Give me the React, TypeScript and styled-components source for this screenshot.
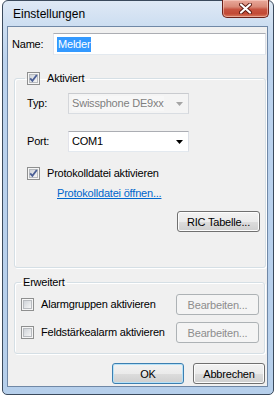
import React from "react";
import styled, { createGlobalStyle } from "styled-components";

const GlobalStyle = createGlobalStyle`
  html, body { margin: 0; padding: 0; background: #ffffff; }
  body { font-family: "Liberation Sans", Arial, sans-serif; font-size: 11px; color: #000; letter-spacing: -0.2px; }
  * { box-sizing: border-box; }
`;

const Window = styled.div`
  margin-left: 2px;
  width: 272px;
  height: 395px;
  border: 1px solid #3b4a5c;
  border-radius: 6px 6px 5px 5px;
  background: linear-gradient(180deg, #dfe9f5 0px, #cddef1 24px, #bcd3ee 60px, #b6cfeb 100%);
  padding: 0 5px 7px 4px;
  display: flex;
  flex-direction: column;
`;

const TitleBar = styled.div`
  height: 25px;
  display: flex;
  align-items: flex-start;
  justify-content: space-between;
`;

const Title = styled.div`
  font-size: 12px;
  line-height: 14px;
  padding: 6px 0 0 6px;
  color: #000;
  letter-spacing: 0;
`;

const CloseButton = styled.div`
  width: 47px;
  height: 18px;
  margin-top: -1px;
  margin-right: -1px;
  border: 1px solid #6b2119;
  border-top: none;
  border-radius: 0 0 5px 5px;
  background: linear-gradient(180deg, #e9a99b 0%, #d98a78 40%, #c75441 55%, #c24a36 80%, #d77a5e 100%);
  box-shadow: inset 0 0 0 1px rgba(255, 220, 210, 0.5);
  display: flex;
  align-items: center;
  justify-content: center;
`;

const Client = styled.div`
  flex: 1;
  border: 1px solid #7088a6;
  background: #f0f0f0;
  display: flex;
  flex-direction: column;
`;

const NameRow = styled.div`
  display: flex;
  align-items: center;
  margin-top: 6px;
  padding-left: 4px;
`;

const Label = styled.span<{ $w: number }>`
  width: ${(p) => p.$w}px;
  flex-shrink: 0;
  line-height: 13px;
`;

const TextInput = styled.div`
  width: 213px;
  height: 22px;
  background: #fff;
  border: 1px solid #abadb3;
  border-left-color: #e2e3ea;
  border-right-color: #dbdfe6;
  border-bottom-color: #e3e9ef;
  display: flex;
  align-items: center;
  padding-left: 3px;
`;

const Selected = styled.span`
  background: #3399ff;
  color: #fff;
  line-height: 15px;
  padding: 0 1px;
`;

const Group = styled.fieldset<{ $pl: number }>`
  margin: 0 0 0 6px;
  width: 252px;
  border: 1px solid #d5dfe5;
  border-radius: 3px;
  box-shadow: inset 1px 1px 0 #fff, 1px 1px 0 #fff;
  padding: 0 5px 0 ${(p) => p.$pl}px;
  display: flex;
  flex-direction: column;
  min-width: 0;
`;

const Group1 = styled(Group)`
  margin-top: 17px;
  height: 196px;
`;

const Group2 = styled(Group)`
  margin-top: 8px;
  height: 78px;
  width: 251px;
`;

const Legend = styled.legend<{ $ml: number; $pr: number }>`
  margin-left: ${(p) => p.$ml}px;
  padding: 0 ${(p) => p.$pr}px 0 2px;
  line-height: 13px;
  height: 13px;
  display: flex;
  align-items: center;
  gap: 7px;
`;

const FieldRow = styled.div<{ $mt: number }>`
  display: flex;
  align-items: center;
  margin-top: ${(p) => p.$mt}px;
`;

const Combo = styled.div<{ $disabled?: boolean }>`
  width: 121px;
  height: 21px;
  border: 1px solid ${(p) => (p.$disabled ? "#c9cbcf" : "#abadb3")};
  border-left-color: ${(p) => (p.$disabled ? "#d4d6da" : "#e2e3ea")};
  border-right-color: ${(p) => (p.$disabled ? "#d4d6da" : "#dbdfe6")};
  border-bottom-color: ${(p) => (p.$disabled ? "#d9dde2" : "#e3e9ef")};
  background: ${(p) => (p.$disabled ? "#f4f4f4" : "#ffffff")};
  color: ${(p) => (p.$disabled ? "#7f7f7f" : "#000")};
  display: flex;
  align-items: center;
  justify-content: space-between;
  padding: 0 5px 0 3px;
`;

const ComboText = styled.span<{ $disabled?: boolean }>`
  white-space: nowrap;
  overflow: hidden;
  line-height: 15px;
  background: ${(p) => (p.$disabled ? "#f7f7f7" : "transparent")};
`;

const CheckRow = styled.label<{ $mt: number }>`
  display: flex;
  align-items: center;
  gap: 7px;
  margin-top: ${(p) => p.$mt}px;
  line-height: 13px;
`;

const Link = styled.a`
  margin-top: 7px;
  margin-left: 30px;
  color: #0066cc;
  text-decoration: underline;
  line-height: 13px;
  align-self: flex-start;
`;

const Button = styled.button<{ $default?: boolean }>`
  font-family: "Liberation Sans", Arial, sans-serif;
  font-size: 11px;
  letter-spacing: -0.2px;
  width: 72px;
  height: 21px;
  padding: 0;
  border-radius: 3px;
  color: #000;
  border: 1px solid ${(p) => (p.$default ? "#3c7fb1" : "#707070")};
  background: linear-gradient(180deg, #f2f2f2 0%, #ebebeb 50%, #dddddd 51%, #cfcfcf 100%);
  box-shadow: inset 0 0 0 1px ${(p) => (p.$default ? "#b6e1f7" : "#fcfcfc")};
  &:disabled {
    border-color: #adb2b5;
    background: #f4f4f4;
    color: #8d8d8d;
    box-shadow: none;
  }
`;

const WideButton = styled(Button)`
  width: 83px;
`;

const RicRow = styled.div`
  display: flex;
  justify-content: flex-end;
  margin-top: 11px;
`;

const OptionRow = styled.div<{ $mt: number }>`
  display: flex;
  align-items: center;
  justify-content: space-between;
  margin-top: ${(p) => p.$mt}px;
  height: 21px;
`;

const Footer = styled.div`
  display: flex;
  justify-content: flex-end;
  gap: 9px;
  margin-top: 9px;
  padding-right: 2px;
`;

const BoxWrap = styled.span`
  display: inline-flex;
  width: 13px;
  height: 13px;
  flex-shrink: 0;
`;

const CheckBox: React.FC<{ checked?: boolean; id: string }> = ({ checked, id }) => (
  <BoxWrap>
    <svg width="13" height="13" viewBox="0 0 13 13">
      <defs>
        <linearGradient id={id} x1="0" y1="0" x2="1" y2="1">
          <stop offset="0" stopColor="#cdd1d6" />
          <stop offset="1" stopColor="#f8f8f8" />
        </linearGradient>
      </defs>
      <rect x="0.5" y="0.5" width="12" height="12" fill="#f6f6f6" stroke="#8e8f8f" />
      <rect x="2.5" y="2.5" width="8" height="8" fill={`url(#${id})`} stroke="#b8bbbf" />
      {checked && (
        <path d="M3.2 6.3 L5.4 8.9 L9.8 3" fill="none" stroke="#4b5f96" strokeWidth="1.8" />
      )}
    </svg>
  </BoxWrap>
);

const Arrow: React.FC<{ color: string }> = ({ color }) => (
  <svg width="7" height="4" viewBox="0 0 7 4">
    <path d="M0 0 H7 L3.5 4 Z" fill={color} />
  </svg>
);

export default function App() {
  return (
    <>
      <GlobalStyle />
      <Window>
        <TitleBar>
          <Title>Einstellungen</Title>
          <CloseButton>
            <svg width="13" height="11" viewBox="0 0 13 11">
              <path d="M2 1.5 L11 9.5 M11 1.5 L2 9.5" stroke="#5a1a12" strokeWidth="4" strokeLinecap="round" />
              <path d="M2 1.5 L11 9.5 M11 1.5 L2 9.5" stroke="#ffffff" strokeWidth="2.2" strokeLinecap="round" />
            </svg>
          </CloseButton>
        </TitleBar>
        <Client>
          <NameRow>
            <Label $w={41}>Name:</Label>
            <TextInput>
              <Selected>Melder</Selected>
            </TextInput>
          </NameRow>

          <Group1 $pl={12}>
            <Legend $ml={-2} $pr={6}>
              <CheckBox checked id="cb1" />
              <span>Aktiviert</span>
            </Legend>
            <FieldRow $mt={8}>
              <Label $w={41}>Typ:</Label>
              <Combo $disabled>
                <ComboText $disabled>Swissphone DE9xx</ComboText>
                <Arrow color="#a5a5a5" />
              </Combo>
            </FieldRow>
            <FieldRow $mt={17}>
              <Label $w={41}>Port:</Label>
              <Combo>
                <ComboText>COM1</ComboText>
                <Arrow color="#000" />
              </Combo>
            </FieldRow>
            <CheckRow $mt={15}>
              <CheckBox checked id="cb2" />
              <span>Protokolldatei aktivieren</span>
            </CheckRow>
            <Link>Protokolldatei öffnen...</Link>
            <RicRow>
              <WideButton>RIC Tabelle...</WideButton>
            </RicRow>
          </Group1>

          <Group2 $pl={6}>
            <Legend $ml={0} $pr={2}>Erweitert</Legend>
            <OptionRow $mt={5}>
              <CheckRow $mt={0}>
                <CheckBox id="cb3" />
                <span>Alarmgruppen aktivieren</span>
              </CheckRow>
              <WideButton disabled>Bearbeiten...</WideButton>
            </OptionRow>
            <OptionRow $mt={7}>
              <CheckRow $mt={0}>
                <CheckBox id="cb4" />
                <span>Feldstärkealarm aktivieren</span>
              </CheckRow>
              <WideButton disabled>Bearbeiten...</WideButton>
            </OptionRow>
          </Group2>

          <Footer>
            <Button $default>OK</Button>
            <Button>Abbrechen</Button>
          </Footer>
        </Client>
      </Window>
    </>
  );
}
